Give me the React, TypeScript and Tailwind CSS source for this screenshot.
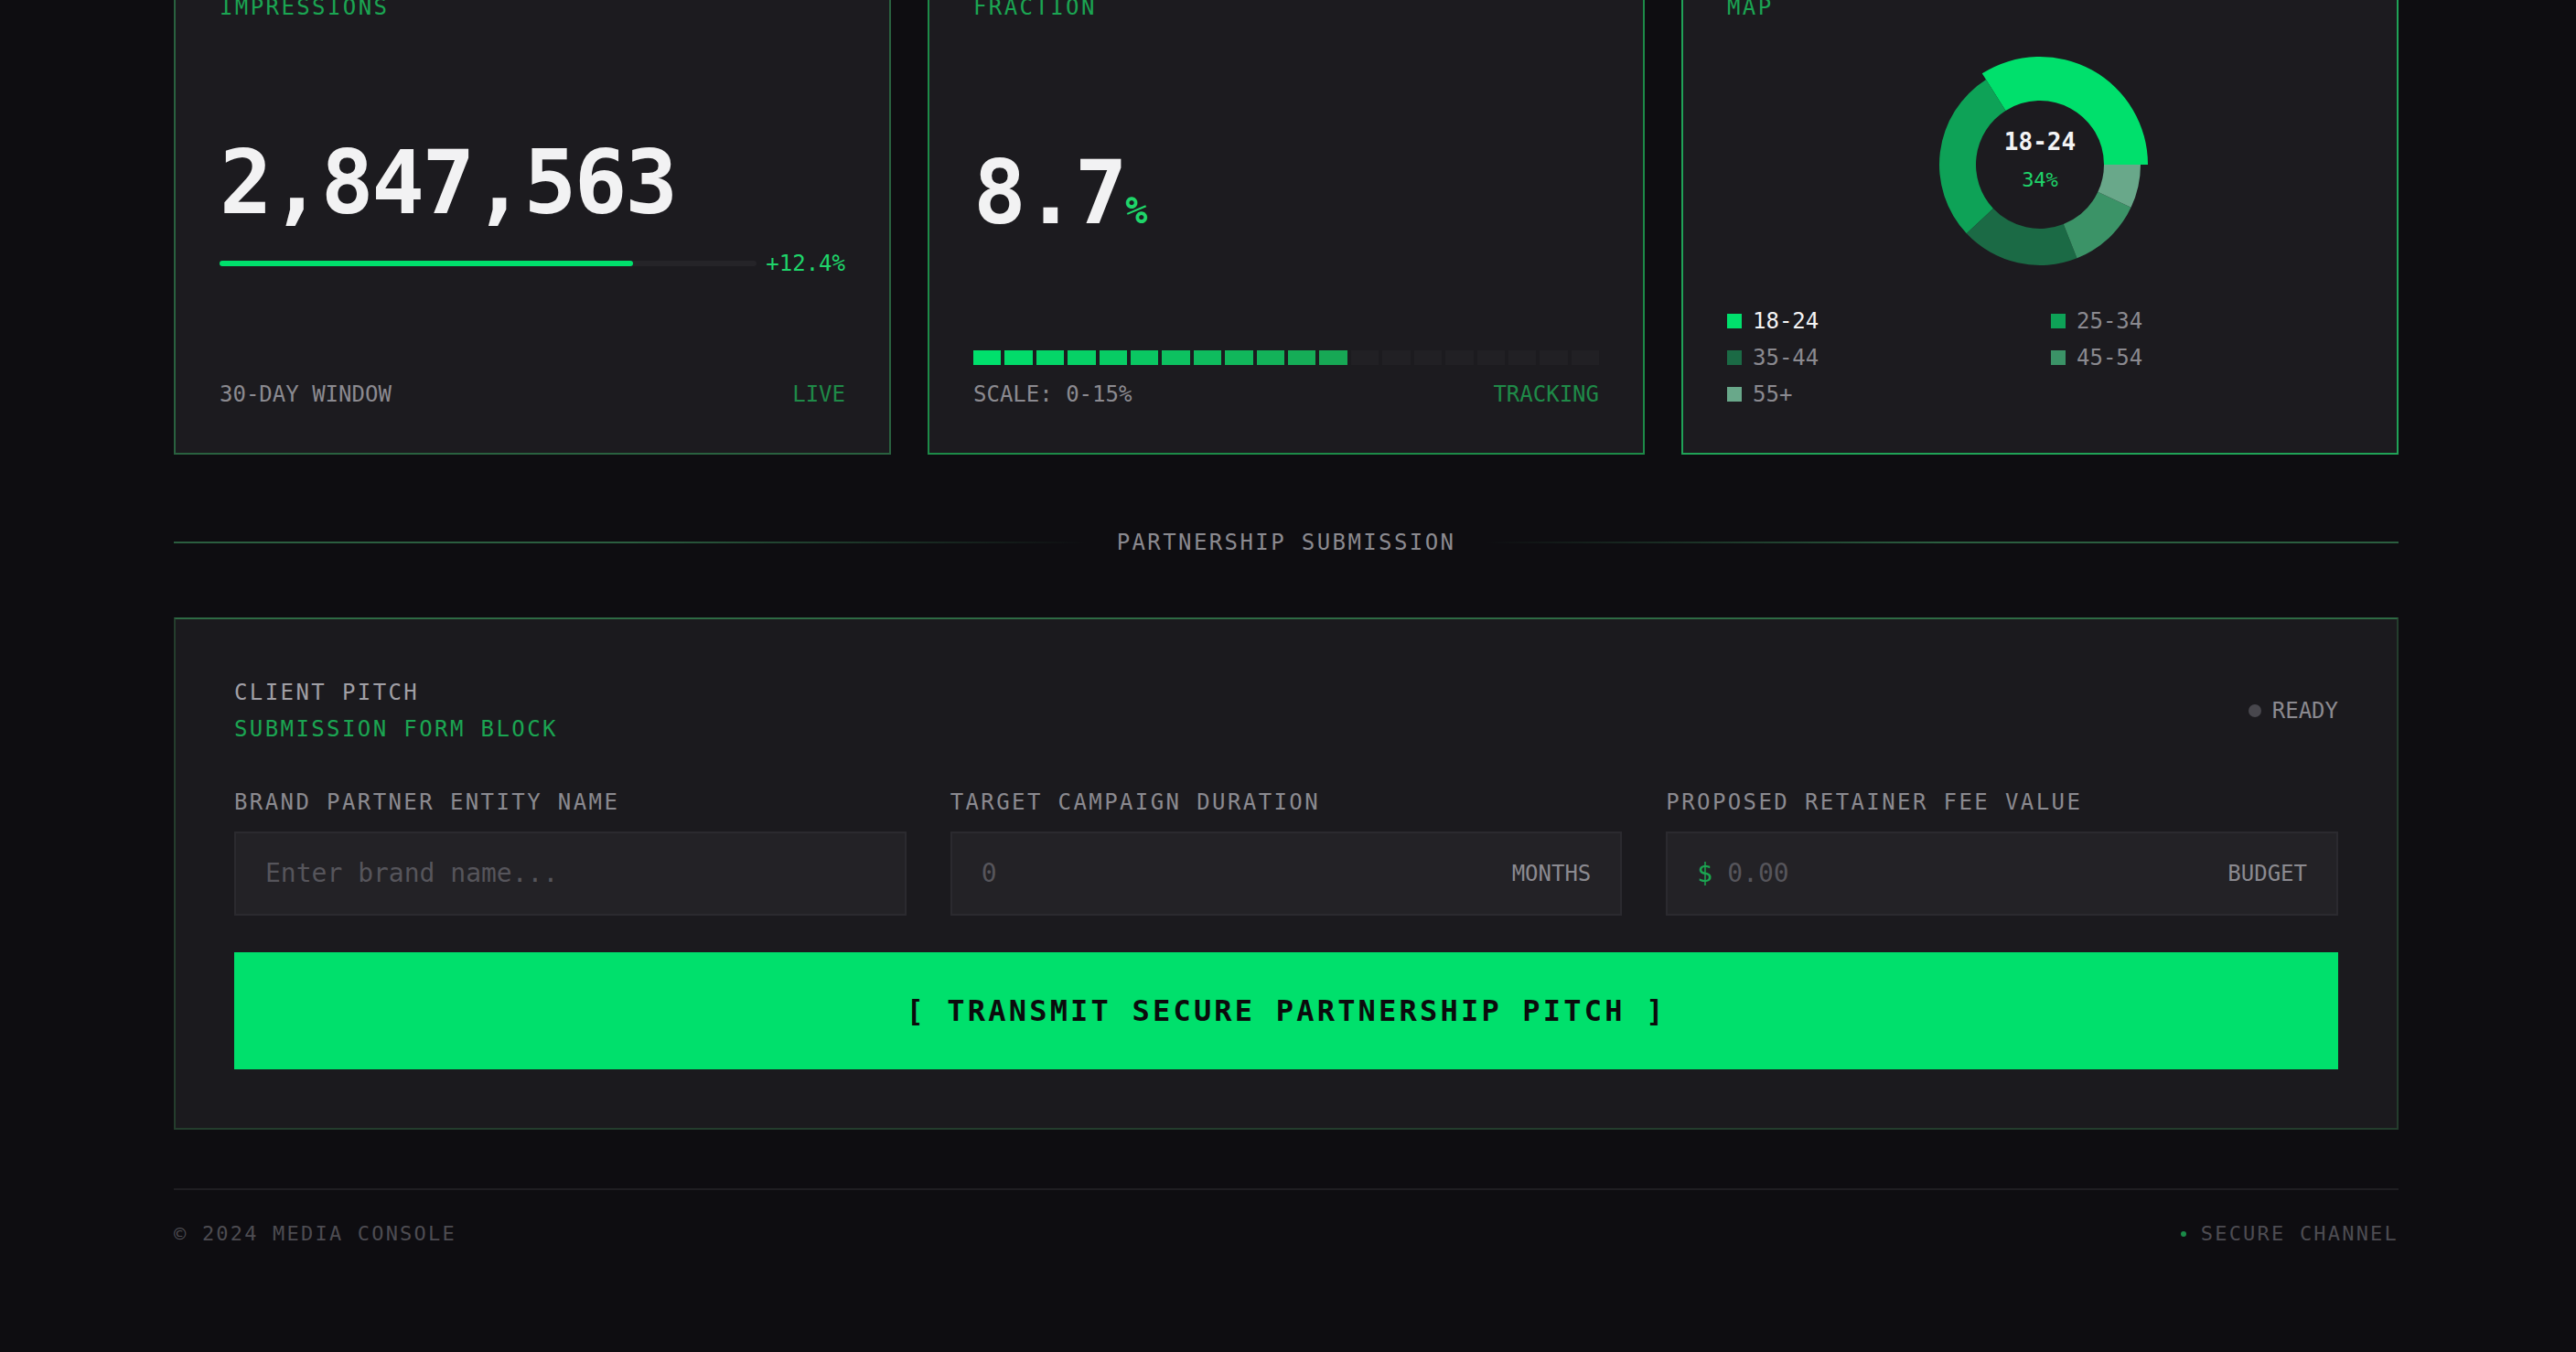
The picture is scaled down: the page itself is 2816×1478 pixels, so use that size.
const mono = "font-['DejaVu_Sans_Mono','Liberation_Mono',monospace]";

// segment colours for the lit part of the fraction bar
const litSegments = [
  'bg-[#00e06c]', 'bg-[#02db6a]', 'bg-[#04d668]', 'bg-[#06d166]', 'bg-[#08cc64]', 'bg-[#0ac762]',
  'bg-[#0dc160]', 'bg-[#0fbc5e]', 'bg-[#11b75b]', 'bg-[#13b259]', 'bg-[#15ad57]', 'bg-[#17a855]',
];

const ageGroups = [
  { label: '18-24', value: 34, fill: '#00e06c', swatch: 'bg-[#00e06c]' },
  { label: '25-34', value: 28, fill: '#0ea257', swatch: 'bg-[#0ea257]' },
  { label: '35-44', value: 19, fill: '#1b6a45', swatch: 'bg-[#1b6a45]' },
  { label: '45-54', value: 12, fill: '#3b9367', swatch: 'bg-[#3b9367]' },
  { label: '55+', value: 7, fill: '#69a88a', swatch: 'bg-[#69a88a]' },
];

function arc(cx: number, cy: number, r0: number, r1: number, a0: number, a1: number) {
  const rad = (d: number) => (d * Math.PI) / 180;
  const p = (r: number, a: number) => `${cx + r * Math.cos(rad(a))} ${cy - r * Math.sin(rad(a))}`;
  const large = a1 - a0 > 180 ? 1 : 0;
  return `M ${p(r1, a0)} A ${r1} ${r1} 0 ${large} 0 ${p(r1, a1)} L ${p(r0, a1)} A ${r0} ${r0} 0 ${large} 1 ${p(r0, a0)} Z`;
}

function Donut() {
  let start = 0;
  return (
    <svg width="240" height="240" viewBox="0 0 240 240" className="mx-auto mt-9 block">
      {ageGroups.map((g, i) => {
        const end = start + (g.value / 100) * 360;
        const d = arc(120, 120, 70, i === 0 ? 118 : 110, start, end);
        start = end;
        return <path key={g.label} d={d} fill={g.fill} />;
      })}
      <text x="120" y="104" textAnchor="middle" fill="#f4f4f5" fontSize="26" fontWeight="700" fontFamily="DejaVu Sans Mono, monospace">
        18-24
      </text>
      <text x="120" y="144" textAnchor="middle" fill="#1fd56a" fontSize="22" fontFamily="DejaVu Sans Mono, monospace">
        34%
      </text>
    </svg>
  );
}

export default function App() {
  return (
    <div className={`${mono} h-[1478px] overflow-hidden bg-[#0e0d11] text-[24px] leading-8`}>
      <div className="ml-[190px] w-[2432px]">
        {/* metric cards (page is scrolled, tops are cut off) */}
        <div className="-mt-[58px] grid grid-cols-3 gap-10">
          <div className="flex h-[555px] flex-col border-2 border-[#29613f] bg-[#1c1b1f] p-12">
            <div className="tracking-[0.1em] text-[#1ba552]">IMPRESSIONS</div>
            <div className="mt-32 text-[96px] font-bold leading-none tracking-tight text-[#f2f2f3]">2,847,563</div>
            <div className="mt-6 flex items-center gap-[10px]">
              <div className="h-[6px] flex-1 rounded-full bg-[#252428]">
                <div className="h-full w-[77%] rounded-full bg-[#00e06c]" />
              </div>
              <span className="text-[#1fd56a]">+12.4%</span>
            </div>
            <div className="mt-auto flex justify-between">
              <span className="text-[#8b8a90]">30-DAY WINDOW</span>
              <span className="text-[#1f8a48]">LIVE</span>
            </div>
          </div>

          <div className="flex h-[555px] flex-col border-2 border-[#1d8a48] bg-[#1c1b1f] p-12">
            <div className="tracking-[0.1em] text-[#1ba552]">FRACTION</div>
            <div className="mt-[139px] flex items-baseline">
              <span className="text-[96px] font-bold leading-none tracking-tight text-[#f2f2f3]">8.7</span>
              <span className="text-[40px] font-bold leading-none text-[#1fd56a]">%</span>
            </div>
            <div className="mt-auto flex h-4 gap-1">
              {Array.from({ length: 20 }).map((_, i) => (
                <div key={i} className={`flex-1 ${i < 12 ? litSegments[i] : 'bg-[#212024]'}`} />
              ))}
            </div>
            <div className="mt-4 flex justify-between">
              <span className="text-[#8b8a90]">SCALE: 0-15%</span>
              <span className="text-[#1f8a48]">TRACKING</span>
            </div>
          </div>

          <div className="flex h-[555px] flex-col border-2 border-[#20a257] bg-[#1c1b1f] p-12">
            <div className="tracking-[0.1em] text-[#1ba552]">MAP</div>
            <Donut />
            <div className="mt-[35px] grid grid-cols-2 gap-x-6 gap-y-2">
              {ageGroups.map((g, i) => (
                <div key={g.label} className="flex items-center gap-3">
                  <span className={`h-4 w-4 ${g.swatch}`} />
                  <span className={i === 0 ? 'text-[#f4f4f5]' : 'text-[#8b8a90]'}>{g.label}</span>
                </div>
              ))}
            </div>
          </div>
        </div>

        {/* section divider */}
        <div className="mt-20 flex items-center gap-8">
          <div className="h-[2px] flex-1 bg-gradient-to-r from-[#2b5e40] via-[#2b5e40] to-transparent" />
          <span className="tracking-[0.1em] text-[#8b8a90]">PARTNERSHIP SUBMISSION</span>
          <div className="h-[2px] flex-1 bg-gradient-to-l from-[#2b5e40] via-[#2b5e40] to-transparent" />
        </div>

        {/* pitch form */}
        <div className="mt-[66px] border-2 border-[#243d2d] border-t-[#2e6a44] bg-[#1b1a1e] p-16">
          <div className="flex items-center justify-between">
            <div>
              <div className="tracking-[0.1em] text-[#a09fa5]">CLIENT PITCH</div>
              <div className="mt-2 tracking-[0.1em] text-[#1ba552]">SUBMISSION FORM BLOCK</div>
            </div>
            <div className="flex items-center gap-3">
              <span className="h-[14px] w-[14px] rounded-full bg-[#48474d]" />
              <span className="text-[#8b8a90]">READY</span>
            </div>
          </div>

          <div className="mt-12 grid grid-cols-3 gap-12">
            <div>
              <div className="mb-4 tracking-[0.1em] text-[#8b8a90]">BRAND PARTNER ENTITY NAME</div>
              <div className="flex h-[92px] items-center border-2 border-[#2b2a2f] bg-[#232226] px-8">
                <input
                  placeholder="Enter brand name..."
                  className="w-full bg-transparent text-[28px] text-[#e4e4e7] outline-none placeholder:text-[#56555b]"
                />
              </div>
            </div>
            <div>
              <div className="mb-4 tracking-[0.1em] text-[#8b8a90]">TARGET CAMPAIGN DURATION</div>
              <div className="flex h-[92px] items-center gap-4 border-2 border-[#2b2a2f] bg-[#232226] px-8">
                <input
                  placeholder="0"
                  className="min-w-0 flex-1 bg-transparent text-[28px] text-[#e4e4e7] outline-none placeholder:text-[#56555b]"
                />
                <span className="text-[#8b8a90]">MONTHS</span>
              </div>
            </div>
            <div>
              <div className="mb-4 tracking-[0.1em] text-[#8b8a90]">PROPOSED RETAINER FEE VALUE</div>
              <div className="flex h-[92px] items-center gap-4 border-2 border-[#2b2a2f] bg-[#232226] px-8">
                <span className="text-[28px] text-[#1ba552]">$</span>
                <input
                  placeholder="0.00"
                  className="min-w-0 flex-1 bg-transparent text-[28px] text-[#e4e4e7] outline-none placeholder:text-[#56555b]"
                />
                <span className="text-[#8b8a90]">BUDGET</span>
              </div>
            </div>
          </div>

          <button className="mt-10 flex h-[128px] w-full items-center justify-center bg-[#00e06c] text-[32px] font-bold tracking-[0.1em] text-[#0b0b0c]">
            [ TRANSMIT SECURE PARTNERSHIP PITCH ]
          </button>
        </div>

        {/* footer */}
        <div className="mt-16 flex justify-between border-t-2 border-[#1f1e22] pt-8 text-[22px] tracking-[0.1em] text-[#4d4c52]">
          <span>© 2024 MEDIA CONSOLE</span>
          <span className="flex items-center gap-4">
            <span className="h-[6px] w-[6px] rounded-full bg-[#1a8a48]" />
            SECURE CHANNEL
          </span>
        </div>
      </div>
    </div>
  );
}
